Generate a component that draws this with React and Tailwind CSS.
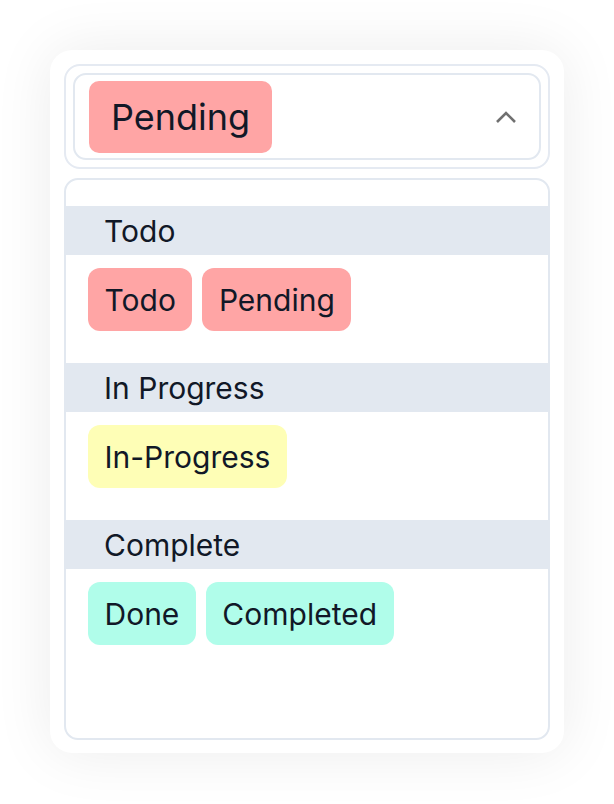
const groups = [
  { label: 'Todo', options: [{ name: 'Todo', color: 'bg-[#ffa5a5]' }, { name: 'Pending', color: 'bg-[#ffa5a5]' }] },
  { label: 'In Progress', options: [{ name: 'In-Progress', color: 'bg-[#fefeb6]' }] },
  { label: 'Complete', options: [{ name: 'Done', color: 'bg-[#b0fdea]' }, { name: 'Completed', color: 'bg-[#b0fdea]' }] },
]

function Chip({ name, color }) {
  return (
    <span className={`${color} h-[63px] px-[16.5px] rounded-[12px] flex items-center text-[30px] leading-none text-[#111827]`}>
      {name}
    </span>
  )
}

export default function App() {
  return (
    <div className="min-h-screen bg-white pt-[50px] pl-[50px]" style={{ fontFamily: "Inter, 'Noto Sans', sans-serif" }}>
      <div className="w-[514px] h-[703px] bg-white rounded-[22px] shadow-[0_0_60px_rgba(0,0,0,0.08)] p-[14px]">
        {/* Control */}
        <div className="border-2 border-[#e5eaf2] rounded-[16px] p-[7px]">
          <div className="h-[87px] border-2 border-[#e2e8f0] rounded-[13px] flex items-center justify-between pl-[14px] pr-[22px]">
            <span className="bg-[#ffa5a5] h-[72px] px-[22px] rounded-[10px] flex items-center text-[36px] leading-none text-[#111827]">
              Pending
            </span>
            <svg width="22" height="14" viewBox="0 0 22 14" fill="none" className="text-[#707070]">
              <path d="M2 12 L11 3 L20 12" stroke="currentColor" strokeWidth="2.6" strokeLinecap="butt" strokeLinejoin="miter" />
            </svg>
          </div>
        </div>

        {/* Menu */}
        <div className="mt-[9px] h-[562px] border-2 border-[#e2e8f0] rounded-[14px] pt-[26px]">
          {groups.map((g) => (
            <div key={g.label}>
              <div className="h-[49px] bg-[#e2e8f0] flex items-center pl-[38px] text-[30px] leading-none text-[#111827]">
                {g.label}
              </div>
              <div className="flex gap-[10px] pl-[22px] pt-[13px] pb-[32px]">
                {g.options.map((o) => (
                  <Chip key={o.name} {...o} />
                ))}
              </div>
            </div>
          ))}
        </div>
      </div>
    </div>
  )
}
